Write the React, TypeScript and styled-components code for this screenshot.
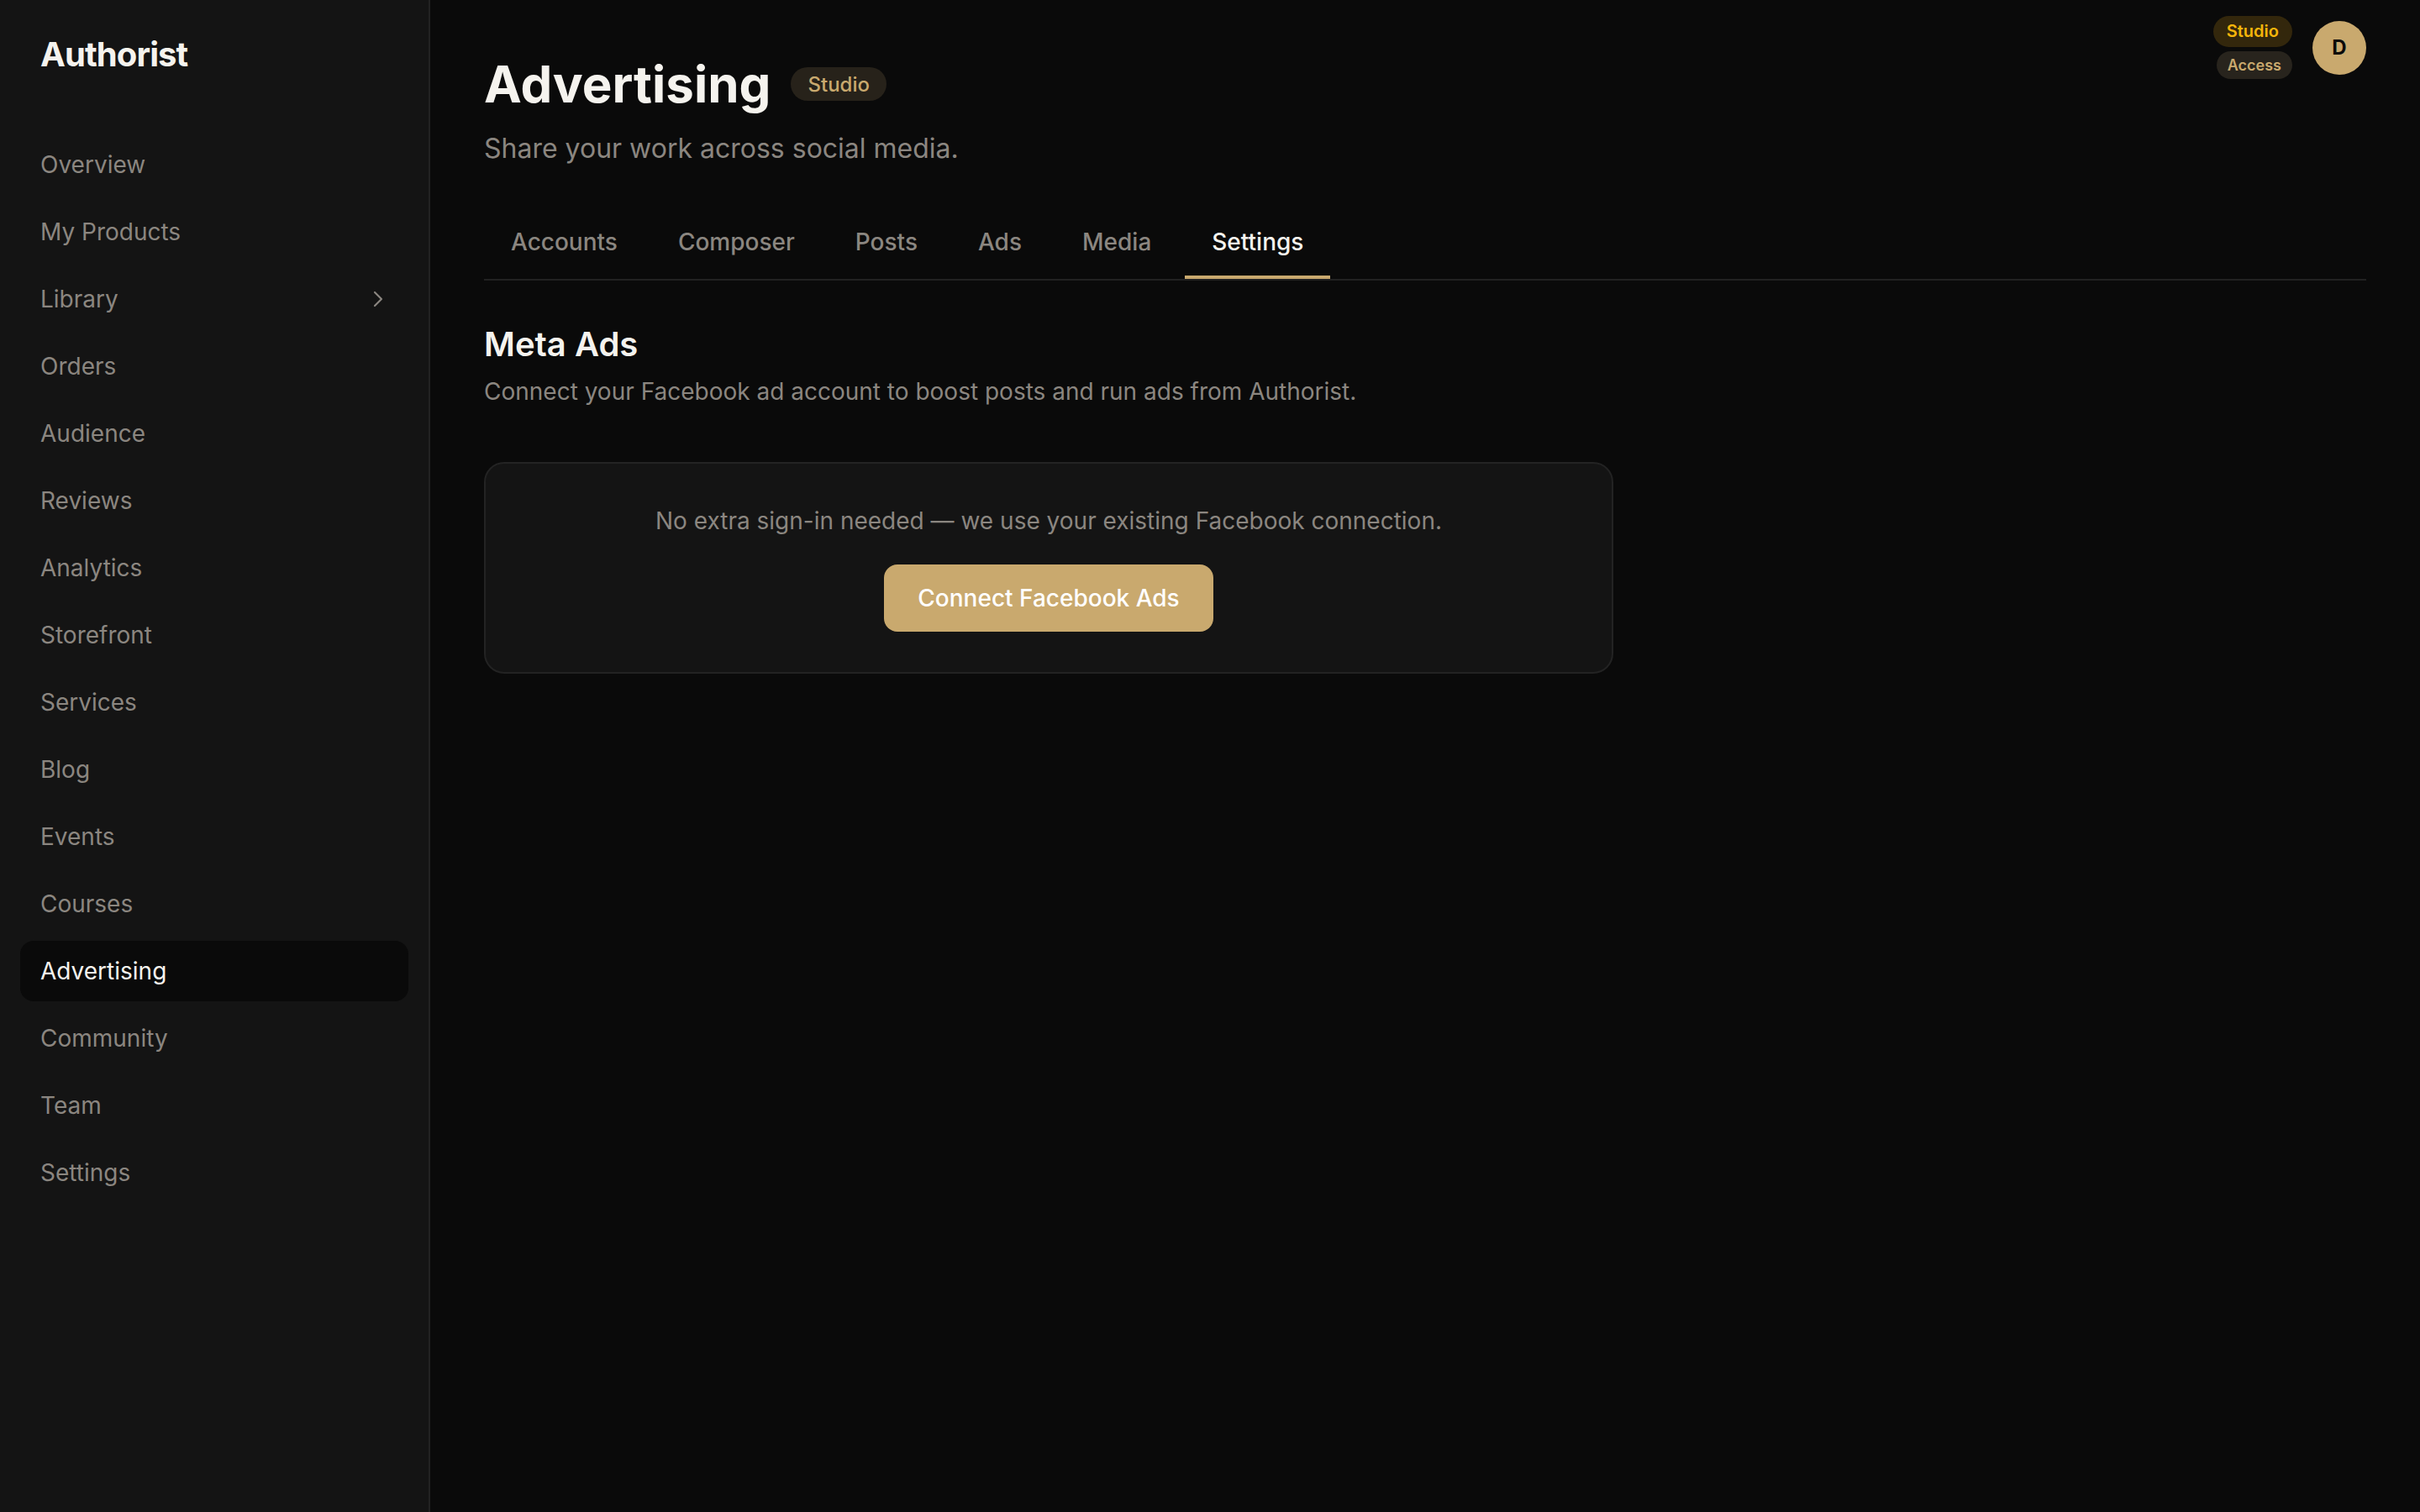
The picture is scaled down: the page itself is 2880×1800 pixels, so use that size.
import React from "react";
import styled, { createGlobalStyle } from "styled-components";
import { ChevronRight } from "lucide-react";

const GlobalStyle = createGlobalStyle`
  html, body {
    margin: 0;
    padding: 0;
    background: #0a0a0a;
  }
  body {
    font-family: Inter, "Noto Sans", "Liberation Sans", sans-serif;
    -webkit-font-smoothing: antialiased;
  }
  * { box-sizing: border-box; }
`;

const Shell = styled.div`
  display: flex;
  min-height: 100vh;
  background: #0a0a0a;
`;

const Sidebar = styled.aside`
  width: 512px;
  flex-shrink: 0;
  min-height: 100vh;
  background: #141414;
  border-right: 2px solid #222222;
  padding: 41px 24px 24px;
`;

const Logo = styled.div`
  padding: 0 24px;
  font-size: 40px;
  line-height: 48px;
  font-weight: 700;
  letter-spacing: -0.9px;
  color: #f5f3ee;
`;

const Nav = styled.nav`
  margin-top: 71px;
  display: flex;
  flex-direction: column;
  gap: 8px;
`;

const NavItem = styled.a<{ $active?: boolean }>`
  height: 72px;
  display: flex;
  align-items: center;
  justify-content: space-between;
  padding: 0 24px;
  border-radius: 16px;
  font-size: 28px;
  line-height: 40px;
  color: ${(p) => (p.$active ? "#f5f3ee" : "#8b8680")};
  background: ${(p) => (p.$active ? "#0a0a0a" : "transparent")};
  text-decoration: none;
  cursor: pointer;

  svg {
    margin-right: -4px;
    color: #8b8680;
  }
`;

const Main = styled.main`
  flex: 1;
  position: relative;
  padding: 64px;
`;

const UserArea = styled.div`
  position: absolute;
  top: 19px;
  right: 64px;
  display: flex;
  align-items: center;
  gap: 24px;
`;

const PlanPills = styled.div`
  display: flex;
  flex-direction: column;
  align-items: flex-end;
  gap: 5px;
`;

const PlanPill = styled.span<{ $tone: "gold" | "tan" }>`
  display: inline-block;
  border-radius: 999px;
  font-weight: 600;
  padding: ${(p) => (p.$tone === "gold" ? "4px 16px" : "3px 13px")};
  font-size: ${(p) => (p.$tone === "gold" ? "20px" : "18px")};
  line-height: ${(p) => (p.$tone === "gold" ? "29px" : "27px")};
  color: ${(p) => (p.$tone === "gold" ? "#f5b50a" : "#c9a96e")};
  background: ${(p) => (p.$tone === "gold" ? "#33270c" : "#28241d")};
`;

const Avatar = styled.div`
  width: 64px;
  height: 64px;
  border-radius: 50%;
  background: #c9a96e;
  color: #0a0a0a;
  display: flex;
  align-items: center;
  justify-content: center;
  font-size: 24px;
  font-weight: 700;
`;

const TitleRow = styled.div`
  display: flex;
  align-items: center;
  gap: 24px;
`;

const Title = styled.h1`
  margin: 0;
  font-size: 60px;
  line-height: 72px;
  font-weight: 700;
  color: #f5f3ee;
`;

const Badge = styled.span`
  height: 40px;
  display: inline-flex;
  align-items: center;
  padding: 0 20px;
  border-radius: 999px;
  background: #27221a;
  color: #c9a96e;
  font-size: 24px;
  font-weight: 500;
`;

const Subtitle = styled.p`
  margin: 17px 0 0;
  font-size: 32px;
  line-height: 48px;
  color: #8b8680;
`;

const Tabs = styled.div`
  margin-top: 47px;
  display: flex;
  gap: 8px;
  border-bottom: 2px solid #222222;
`;

const Tab = styled.button<{ $active?: boolean }>`
  background: none;
  border: none;
  border-bottom: 4px solid ${(p) => (p.$active ? "#c9a96e" : "transparent")};
  padding: 22px 32px;
  font-family: inherit;
  font-size: 28px;
  line-height: 36px;
  font-weight: 500;
  color: ${(p) => (p.$active ? "#f5f3ee" : "#8b8680")};
  cursor: pointer;
`;

const Section = styled.section`
  margin-top: 52px;
`;

const SectionTitle = styled.h2`
  margin: 0;
  font-size: 40px;
  line-height: 48px;
  font-weight: 600;
  color: #f5f3ee;
`;

const SectionDesc = styled.p`
  margin: 12px 0 0;
  font-size: 28px;
  line-height: 40px;
  color: #8b8680;
`;

const Card = styled.div`
  margin-top: 64px;
  max-width: 1344px;
  border: 2px solid #232323;
  background: #141414;
  border-radius: 24px;
  padding: 48px;
  display: flex;
  flex-direction: column;
  align-items: center;
  gap: 32px;
`;

const CardText = styled.p`
  margin: 0;
  font-size: 28px;
  line-height: 40px;
  color: #8b8680;
  text-align: center;
`;

const PrimaryButton = styled.button`
  background: #c9a96e;
  color: #ffffff;
  border: none;
  border-radius: 16px;
  padding: 20px 40px;
  font-family: inherit;
  font-size: 28px;
  line-height: 40px;
  font-weight: 500;
  cursor: pointer;
`;

const navItems = [
  "Overview",
  "My Products",
  "Library",
  "Orders",
  "Audience",
  "Reviews",
  "Analytics",
  "Storefront",
  "Services",
  "Blog",
  "Events",
  "Courses",
  "Advertising",
  "Community",
  "Team",
  "Settings",
];

const tabs = ["Accounts", "Composer", "Posts", "Ads", "Media", "Settings"];

export default function App() {
  return (
    <>
      <GlobalStyle />
      <Shell>
        <Sidebar>
          <Logo>Authorist</Logo>
          <Nav>
            {navItems.map((item) => (
              <NavItem key={item} $active={item === "Advertising"}>
                <span>{item}</span>
                {item === "Library" && <ChevronRight size={32} strokeWidth={1.6} />}
              </NavItem>
            ))}
          </Nav>
        </Sidebar>
        <Main>
          <UserArea>
            <PlanPills>
              <PlanPill $tone="gold">Studio</PlanPill>
              <PlanPill $tone="tan">Access</PlanPill>
            </PlanPills>
            <Avatar>D</Avatar>
          </UserArea>
          <TitleRow>
            <Title>Advertising</Title>
            <Badge>Studio</Badge>
          </TitleRow>
          <Subtitle>Share your work across social media.</Subtitle>
          <Tabs>
            {tabs.map((t) => (
              <Tab key={t} $active={t === "Settings"}>
                {t}
              </Tab>
            ))}
          </Tabs>
          <Section>
            <SectionTitle>Meta Ads</SectionTitle>
            <SectionDesc>
              Connect your Facebook ad account to boost posts and run ads from Authorist.
            </SectionDesc>
            <Card>
              <CardText>
                No extra sign-in needed — we use your existing Facebook connection.
              </CardText>
              <PrimaryButton>Connect Facebook Ads</PrimaryButton>
            </Card>
          </Section>
        </Main>
      </Shell>
    </>
  );
}
